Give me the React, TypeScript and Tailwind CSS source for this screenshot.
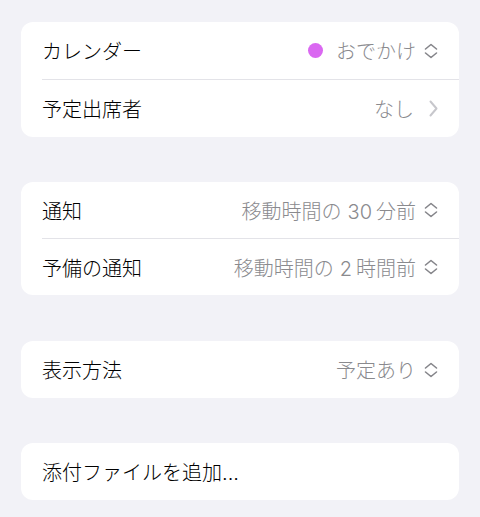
const font = { fontFamily: '"Inter", "Noto Sans CJK JP", sans-serif' };

const UpDown = () => (
  <svg width="16" height="18" viewBox="0 0 16 18" fill="none" className="shrink-0">
    <path d="M2.5 7 L8 2.5 L13.5 7" stroke="#85858a" strokeWidth="1.6" strokeLinecap="round" strokeLinejoin="round" />
    <path d="M2.5 11 L8 15.5 L13.5 11" stroke="#85858a" strokeWidth="1.6" strokeLinecap="round" strokeLinejoin="round" />
  </svg>
);

const Chevron = () => (
  <svg width="11" height="19" viewBox="0 0 11 19" fill="none" className="shrink-0">
    <path d="M2.5 2.5 L8.5 9.5 L2.5 16.5" stroke="#c7c7cc" strokeWidth="2" strokeLinecap="round" strokeLinejoin="round" />
  </svg>
);

type RowProps = {
  label: string;
  value?: React.ReactNode;
  icon?: 'updown' | 'chevron';
  dot?: boolean;
  divider?: boolean;
  h: string;
};

const Row = ({ label, value, icon, dot, divider, h }: RowProps) => (
  <div className="pl-[21px]">
    <div className={`flex items-center ${h} pr-[20px] ${divider ? 'border-b border-[#e3e3e8]' : ''}`}>
      <span className="text-[20px] text-black flex-1 pt-[3px] font-light">{label}</span>
      {dot && <span className="w-[15px] h-[15px] rounded-full bg-[#da68f1] mr-[13px]"></span>}
      {value && <span className="text-[20px] text-[#8a8a8e] pt-[3px] font-light">{value}</span>}
      {icon === 'updown' && <span className="ml-[7px] flex"><UpDown /></span>}
      {icon === 'chevron' && <span className="ml-[14px] flex"><Chevron /></span>}
    </div>
  </div>
);

export default function App() {
  return (
    <div className="min-h-[517px] bg-[#f2f2f7] px-[21px] pt-[22px] flex flex-col" style={font}>
      <div className="bg-white rounded-[12px] overflow-hidden">
        <Row h="h-[58px]" label="カレンダー" value="おでかけ" dot icon="updown" divider />
        <Row h="h-[57px]" label="予定出席者" value="なし" icon="chevron" />
      </div>

      <div className="bg-white rounded-[12px] overflow-hidden mt-[45px]">
        <Row
          h="h-[57px]"
          label="通知"
          value={<>移動時間の<span className="ml-[6px] mr-[4px]">30</span>分前</>}
          icon="updown"
          divider
        />
        <Row
          h="h-[56px]"
          label="予備の通知"
          value={<>移動時間の<span className="ml-[6px] mr-[4px]">2</span>時間前</>}
          icon="updown"
        />
      </div>

      <div className="bg-white rounded-[12px] overflow-hidden mt-[46px]">
        <Row h="h-[57px]" label="表示方法" value="予定あり" icon="updown" />
      </div>

      <div className="bg-white rounded-[12px] overflow-hidden mt-[45px]">
        <Row h="h-[57px]" label="添付ファイルを追加..." />
      </div>
    </div>
  );
}
